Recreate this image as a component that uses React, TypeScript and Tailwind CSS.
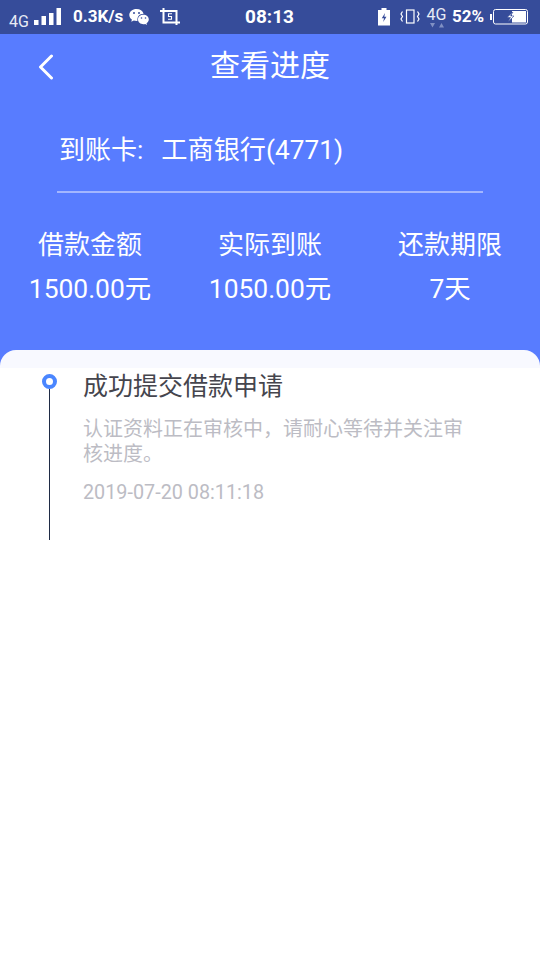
const FONT = "font-['Roboto','Noto_Sans_CJK_SC',sans-serif]";

function StatusBar() {
  return (
    <div className="flex h-[34px] items-center bg-[#364c9a] text-white">
      <span className="ml-[9px] mt-[9px] w-[20px] text-[16px] leading-none text-[#e8ebf5]">4G</span>
      <svg width="28" height="18" viewBox="0 0 28 18" className="ml-[5px] mb-[2px] mt-[1px]" fill="#fff">
        <rect x="0" y="12" width="4.500" height="5" />
        <rect x="7.500" y="8" width="4.500" height="9" />
        <rect x="15" y="5" width="4.500" height="12" />
        <rect x="22.500" y="0" width="4.500" height="17" />
      </svg>
      <span className="ml-[11px] w-[51px] text-[17px] font-bold leading-none mb-[2px]">0.3K/s</span>
      <svg width="20" height="18" viewBox="0 0 20 18" className="ml-[5px]" fill="#fff">
        <path d="M7.500 1C3.500 1 .3 3.600.3 7c0 1.900 1 3.500 2.600 4.600L2.300 13.800l2.500-1.300c.8.2 1.700.4 2.700.4.300 0 .6 0 .9 0C8.200 7.800 10.600 6 14.600 5.800 13.800 3 11 1 7.500 1z" />
        <path d="M19.800 11.500c0-2.700-2.500-4.700-5.400-4.700-3 0-5.400 2-5.400 4.700 0 2.700 2.400 4.700 5.400 4.700.6 0 1.200-.1 1.800-.3l1.800 1-.5-1.700c1.400-.8 2.300-2.200 2.300-3.700z" />
        <circle cx="5" cy="5" r="1" fill="#364c9a" />
        <circle cx="10" cy="5" r="1" fill="#364c9a" />
        <circle cx="12.500" cy="10" r=".8" fill="#364c9a" />
        <circle cx="16.500" cy="10" r=".8" fill="#364c9a" />
      </svg>
      <svg width="20" height="18" viewBox="0 0 20 18" className="ml-[11px]" fill="none" stroke="#fff" strokeWidth="2">
        <path d="M0 3h16.500V17M3.500 0v14.500H20" />
        <path d="M12 5.800H8.500v2.700h3V11.200H8" strokeWidth="1.100" />
      </svg>
      <span className="ml-[65px] w-[49px] text-[19px] font-bold leading-none mb-[1px]">08:13</span>
      <svg width="12" height="18" viewBox="0 0 12 18" className="ml-[84px]" fill="#fff">
        <path d="M3.500 0h5v2h3.500v15.500H0V2h3.500z" />
        <path d="M7 5 3.800 10.200h2.200l-.8 3.800 3.300-5.300h-2.200z" fill="#364c9a" />
      </svg>
      <svg width="20" height="18" viewBox="0 0 20 18" className="ml-[10px]" fill="none" stroke="#fff" strokeWidth="1.200">
        <rect x="6.500" y="2" width="7.500" height="13" />
        <path d="M2.500 3.500 1 6l1.500 2.500L1 11l1.500 2.500M17.500 3.500 19 6l-1.500 2.500L19 11l-1.500 2.500" />
      </svg>
      <div className="ml-[6px] flex w-[21px] flex-col items-center">
        <span className="text-[16px] leading-[15px] text-[#e8ebf5]">4G</span>
        <svg width="14" height="5" viewBox="0 0 14 5" className="mt-[1px]" fill="#8090c4">
          <path d="M0 0h5L2.500 4.500zM9 4.500h5L11.500 0z" />
        </svg>
      </div>
      <span className="ml-[5px] w-[33px] text-[17px] font-bold leading-none mb-[1px]">52%</span>
      <svg width="38" height="16" viewBox="0 0 38 16" className="ml-[5px] mb-[1px]">
        <rect x="0" y="5" width="2" height="6" fill="#fff" />
        <rect x="3.500" y="0.500" width="34" height="14.500" rx="2" fill="none" stroke="#fff" />
        <rect x="22" y="2" width="14" height="11.500" fill="#fff" />
        <path d="M23 3 17 8.500h3.500L18 13l6-6h-3.500z" fill="#fff" stroke="#364c9a" strokeWidth=".6" />
      </svg>
    </div>
  );
}

function Stat({ label, value }: { label: string; value: string }) {
  return (
    <div className="flex flex-col items-center">
      <span className="text-[26px] leading-[34px]">{label}</span>
      <span className="mt-[10px] text-[26.400px] leading-[34px]">{value}</span>
    </div>
  );
}

export default function App() {
  return (
    <div className={`${FONT} h-[960px] w-[540px] overflow-hidden bg-white`}>
      <StatusBar />
      <div className="h-[316px] bg-[#587cff] text-white">
        <div className="relative flex h-[64px] items-center justify-center">
          <svg width="16" height="26" viewBox="0 0 16 26" className="absolute left-[38px] top-[20px]" fill="none" stroke="#fff" strokeWidth="3" strokeLinecap="round" strokeLinejoin="round">
            <path d="M13.500 2 2.500 13l11 11" />
          </svg>
          <span className="text-[30px] leading-none">查看进度</span>
        </div>
        <div className="mx-[57px] mt-[18px] flex h-[77px] items-center border-b-2 border-[#a3b6ff] pb-[6px] pl-[2px] text-[26px]">
          <span>到账卡:</span>
          <span className="ml-[18px] text-[26.200px]">工商银行(4771)</span>
        </div>
        <div className="mt-[34.500px] grid grid-cols-3">
          <Stat label="借款金额" value="1500.00元" />
          <Stat label="实际到账" value="1050.00元" />
          <Stat label="还款期限" value="7天" />
        </div>
      </div>
      <div className="bg-[#587cff]">
        <div className="h-[18px] rounded-t-[16px] bg-[#f8f9ff]" />
      </div>
      <div className="flex">
        <div className="ml-[42px] flex w-[15px] flex-col items-center">
          <div className="mt-[6px] box-border h-[15px] w-[15px] rounded-full border-[4px] border-[#4a86ff] bg-white" />
          <div className="h-[151px] w-px bg-[#1f2b45]" />
        </div>
        <div className="ml-[26px] w-[385px]">
          <div className="mt-px text-[25px] leading-[36px] text-[#45454d]">成功提交借款申请</div>
          <div className="mt-[12px] text-[20px] leading-[25px] text-[#bcbcc4]">认证资料正在审核中，请耐心等待并关注审核进度。</div>
          <div className="mt-[13px] text-[19.800px] leading-[26px] text-[#bcbcc4]">2019-07-20 08:11:18</div>
        </div>
      </div>
    </div>
  );
}
